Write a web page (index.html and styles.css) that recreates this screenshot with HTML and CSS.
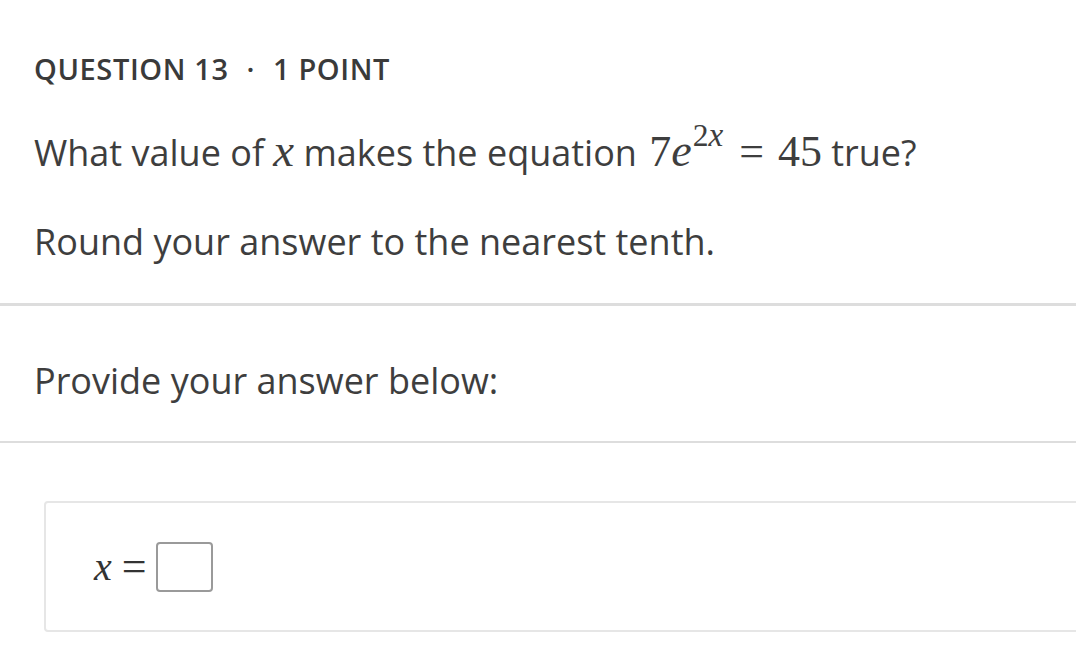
FILE: index.html
```html
<!DOCTYPE html>
<html>
<head>
<meta charset="utf-8">
<link rel="stylesheet" href="styles.css">
</head>
<body>
<main class="question">
  <header class="q-head">QUESTION 13<span class="dot">·</span>1 POINT</header>
  <div class="q-body">
    <p class="q-text">What value of <span class="mi">x</span> makes the equation <span class="math"><span class="mn">7</span><span class="mi">e</span><sup class="sup"><span class="mn">2</span><span class="mi">x</span></sup><span class="mo">=</span><span class="mn">45</span></span> true?</p>
    <p class="q-text round">Round your answer to the nearest tenth.</p>
  </div>
  <div class="answer-label">Provide your answer below:</div>
  <div class="answer-area">
    <div class="answer-box">
      <span class="ans-x">x</span><span class="ans-eq">=</span><span class="ans-input"></span>
    </div>
  </div>
</main>
</body>
</html>
```

FILE: styles.css
```css
html, body {
  margin: 0;
  padding: 0;
  background: #ffffff;
}

body {
  font-family: "Open Sans", "Noto Sans", sans-serif;
  color: #3e3e3e;
}

.question {
  display: flex;
  flex-direction: column;
}

.q-head {
  padding: 50px 0 0 34px;
  font-size: 29px;
  line-height: 38px;
  font-weight: 600;
  letter-spacing: 0.6px;
  color: #3a3a3a;
}

.q-head .dot {
  padding: 0 18px;
  font-weight: 600;
}

.q-body {
  padding: 43px 0 39px 34px;
  border-bottom: 3px solid #dddddd;
}

.q-text {
  margin: 0;
  font-size: 36px;
  line-height: 44px;
}

.q-text.round {
  margin-top: 45px;
}

.mi {
  font-family: "Liberation Serif", "DejaVu Serif", serif;
  font-style: italic;
  font-size: 1.3em;
  line-height: 0;
}

.math {
  font-family: "Liberation Serif", "DejaVu Serif", serif;
  font-size: 1.22em;
  line-height: 0;
  margin-left: 3px;
}

.math .mi {
  font-size: 1.05em;
}

.mn {
  font-family: "Liberation Serif", "DejaVu Serif", serif;
}

.sup {
  font-size: 0.72em;
  line-height: 0;
  vertical-align: 0.64em;
  margin-left: 1px;
}

.mo {
  padding: 0 14px 0 16px;
}

.answer-label {
  padding: 51px 0 36px 34px;
  font-size: 36px;
  line-height: 48px;
  border-bottom: 2px solid #dddddd;
}

.answer-area {
  padding: 58px 0 0 44px;
}

.answer-box {
  display: flex;
  align-items: center;
  margin-right: -10px;
  border: 2px solid #e6e6e6;
  border-radius: 4px;
  padding-left: 48px;
  box-sizing: border-box;
  height: 131px;
  font-family: "Liberation Serif", "DejaVu Serif", serif;
  color: #333333;
}

.ans-x {
  font-style: italic;
  font-size: 40px;
}

.ans-eq {
  font-size: 44px;
  margin: 0 9px 0 10px;
}

.ans-input {
  width: 53px;
  height: 46px;
  border: 2px solid #9a9a9a;
  border-radius: 4px;
}
```
